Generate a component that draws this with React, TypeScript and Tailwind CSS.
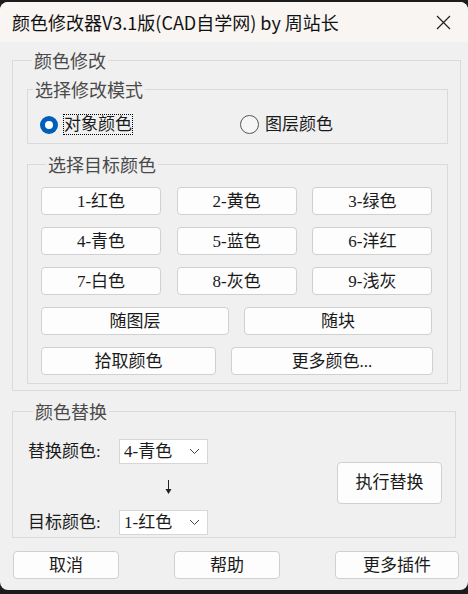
import React, { useState } from 'react';

const cjk = "font-['Liberation_Serif','Noto_Sans_CJK_SC',serif]";
const sans = "font-['Noto_Sans_CJK_SC','Noto_Sans',sans-serif]";

const Btn: React.FC<{ label: string; className?: string }> = ({ label, className = '' }) => (
  <button
    className={`h-[28px] rounded-[4px] border border-[#d0d0d0] bg-[#fdfdfd] text-[17px] leading-none text-[#1a1a1a] ${cjk} ${className}`}
  >
    {label}
  </button>
);

const Legend: React.FC<{ text: string }> = ({ text }) => (
  <legend className={`ml-[5px] px-[2px] text-[18px] leading-[22px] text-[#4a4a4a] ${sans}`}>{text}</legend>
);

const Chevron = () => (
  <svg width="11" height="7" viewBox="0 0 11 7" fill="none" stroke="#444" strokeWidth="1">
    <path d="M1 1l4.5 4.5L10 1" />
  </svg>
);

const Combo: React.FC<{ value: string }> = ({ value }) => (
  <div className="flex h-[25px] w-[89px] items-center justify-between border border-[#d6d6d6] bg-white pl-[4px] pr-[7px]">
    <span className={`text-[17px] leading-none text-[#1a1a1a] ${cjk}`}>{value}</span>
    <Chevron />
  </div>
);

const Radio: React.FC<{ checked: boolean }> = ({ checked }) =>
  checked ? (
    <span className="flex h-[18px] w-[18px] items-center justify-center rounded-full bg-[#005fb8]">
      <span className="h-[8px] w-[8px] rounded-full bg-white" />
    </span>
  ) : (
    <span className="h-[19px] w-[19px] rounded-full border border-[#555] bg-[#f6f6f6]" />
  );

const colors = ['1-红色', '2-黄色', '3-绿色', '4-青色', '5-蓝色', '6-洋红', '7-白色', '8-灰色', '9-浅灰'];

const App: React.FC = () => {
  const [mode, setMode] = useState<'object' | 'layer'>('object');

  return (
    <div className="h-[594px] w-[468px] overflow-hidden bg-[#1c1c1c] pt-[2px]">
      <div className="relative h-[588px] overflow-hidden rounded-[8px] bg-[#f0f0f0]">
        <div className="flex h-[40px] items-center justify-between bg-[#f9f5f2] pl-[12px] pr-[17px]">
          <span className={`text-[18px] text-[#111] ${sans}`}>颜色修改器V3.1版(CAD自学网) by 周站长</span>
          <svg width="15" height="15" viewBox="0 0 15 15" stroke="#222" strokeWidth="1.2">
            <path d="M1 1l13 13M14 1L1 14" />
          </svg>
        </div>

        <div className="px-[12px]">
          <fieldset className="mt-[7px] border border-[#dadada] pb-[6px] pl-[14px] pr-[12px]">
            <Legend text="颜色修改" />

            <fieldset className="mt-[7px] h-[66px] border border-[#dadada]">
              <Legend text="选择修改模式" />
              <div className="mt-[14px] flex items-center">
                <button onClick={() => setMode('object')} className="ml-[12px] flex items-center">
                  <Radio checked={mode === 'object'} />
                  <span className={`ml-[5px] border border-dotted border-black text-[17px] leading-[19px] text-[#1a1a1a] ${cjk}`}>
                    对象颜色
                  </span>
                </button>
                <button onClick={() => setMode('layer')} className="ml-[107px] flex items-center">
                  <Radio checked={mode === 'layer'} />
                  <span className={`ml-[6px] text-[17px] leading-[19px] text-[#1a1a1a] ${cjk}`}>图层颜色</span>
                </button>
              </div>
            </fieldset>

            <fieldset className="mt-[9px] border border-[#dadada] pb-[8px] pl-[13px] pr-[14px]">
              <Legend text="选择目标颜色" />
              <div className="mt-[12px] grid grid-cols-3 gap-x-[15px] gap-y-[12px]">
                {colors.map((c) => (
                  <Btn key={c} label={c} className="w-[120px]" />
                ))}
              </div>
              <div className="mt-[12px] flex gap-[15px]">
                <Btn label="随图层" className="w-[188px]" />
                <Btn label="随块" className="w-[188px]" />
              </div>
              <div className="mt-[12px] flex gap-[15px]">
                <Btn label="拾取颜色" className="w-[175px]" />
                <Btn label="更多颜色..." className="w-[202px]" />
              </div>
            </fieldset>
          </fieldset>

          <fieldset className="mt-[9px] h-[138px] border border-[#dadada] pl-[15px] pr-[13px]">
            <Legend text="颜色替换" />
            <div className="flex items-center justify-between">
              <div className="mt-[17px] flex flex-col">
                <div className="flex items-center">
                  <span className={`w-[91px] text-[17px] text-[#1a1a1a] ${cjk}`}>替换颜色:</span>
                  <Combo value="4-青色" />
                </div>
                <div className="flex h-[45px] items-center pl-[137px]">
                  <svg width="7" height="16" viewBox="0 0 7 16" fill="#222">
                    <rect x="3" y="1" width="1" height="11" />
                    <path d="M0.5 10h6L3.5 15z" />
                  </svg>
                </div>
                <div className="flex items-center">
                  <span className={`w-[91px] text-[17px] text-[#1a1a1a] ${cjk}`}>目标颜色:</span>
                  <Combo value="1-红色" />
                </div>
              </div>
              <button
                className={`mt-[8px] h-[42px] w-[105px] rounded-[4px] border border-[#d0d0d0] bg-[#fdfdfd] text-[17px] text-[#1a1a1a] ${cjk}`}
              >
                执行替换
              </button>
            </div>
          </fieldset>

          <div className="ml-[1px] mt-[13px] flex w-[446px] justify-between">
            <Btn label="取消" className="w-[106px]" />
            <Btn label="帮助" className="w-[106px]" />
            <Btn label="更多插件" className="w-[124px]" />
          </div>
        </div>
      </div>
    </div>
  );
};

export default App;
